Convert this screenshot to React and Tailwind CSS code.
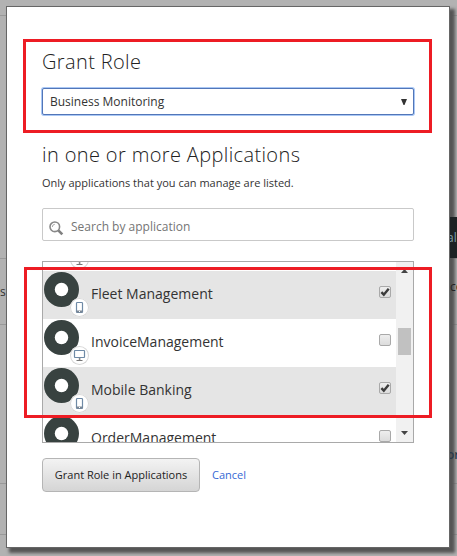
import React from 'react';

const apps = [
  { name: 'Expense Management', device: 'desktop', checked: false },
  { name: 'Fleet Management', device: 'phone', checked: true },
  { name: 'InvoiceManagement', device: 'desktop', checked: false },
  { name: 'Mobile Banking', device: 'phone', checked: true },
  { name: 'OrderManagement', device: 'desktop', checked: false },
];

function DeviceIcon({ device }) {
  if (device === 'phone') {
    return (
      <svg width="19" height="19" viewBox="0 0 19 19" fill="none">
        <rect x="6.5" y="4.5" width="6" height="10" rx="0.8" stroke="#6f8aa6" strokeWidth="1.2" />
        <path d="M6.5 12.5h6v2h-6z" fill="#7b8794" />
        <rect x="9" y="13" width="1" height="1" fill="#fff" />
      </svg>
    );
  }
  return (
    <svg width="19" height="19" viewBox="0 0 19 19" fill="none">
      <rect x="4.5" y="4.5" width="10" height="7" rx="0.5" stroke="#6f8aa6" strokeWidth="1.2" />
      <path d="M8.8 12h1.6v2H8.8z" fill="#888" />
      <path d="M6.5 14.5h6" stroke="#777" />
    </svg>
  );
}

function CheckBox({ checked }) {
  return (
    <span className="mr-[5px] mt-[15px] flex h-3 w-3 shrink-0 items-center justify-center rounded-[2px] border border-[#a9a9a9] bg-linear-to-b from-[#eeeeee] to-[#dcdcdc]">
      {checked && (
        <svg width="10" height="10" viewBox="0 0 10 10" className="shrink-0">
          <path d="M1.4 5.2l2.4 2.5L8.7 1.8" fill="none" stroke="#3c3c3c" strokeWidth="2.4" />
        </svg>
      )}
    </span>
  );
}

function AppRow({ app }) {
  return (
    <div className={`flex h-12 w-full shrink-0 pl-px ${app.checked ? 'bg-[#e5e5e5]' : 'bg-white'}`}>
      <div className="relative mt-px h-[35px] w-[35px] shrink-0">
        <svg width="35" height="35" viewBox="0 0 35 35">
          <circle cx="17.5" cy="17.5" r="17.5" fill="#384240" />
          <circle cx="17.5" cy="17.5" r="6.7" fill="#fff" />
        </svg>
        <span className="absolute left-[25.5px] top-[25.5px] h-[19px] w-[19px] rounded-full bg-white shadow-[inset_0_0_0_1px_#d8d8d8]">
          <DeviceIcon device={app.device} />
        </span>
      </div>
      <span className="ml-3 mt-[13px] grow text-[14px] leading-5 text-[#333]">{app.name}</span>
      <CheckBox checked={app.checked} />
    </div>
  );
}

function Backdrop() {
  return (
    <div className="absolute inset-0 overflow-hidden bg-[#b2b2b2] text-[12px] leading-4 text-[#333]">
      <div className="absolute left-0 top-[15px] h-px w-full bg-[#999]" />
      <div className="absolute left-0 top-[258px] h-px w-full bg-[#999]" />
      <div className="absolute left-0 top-[324px] h-px w-full bg-[#999]" />
      <div className="absolute left-0 top-[483px] h-px w-full bg-[#999]" />
      <div className="absolute left-0 top-[534px] h-px w-full bg-[#999]" />
      <span className="absolute left-0 top-[284px]">s</span>
    </div>
  );
}

export default function App() {
  return (
    <div className="relative h-[556px] w-[457px] overflow-hidden pl-[6px] pt-[6px] font-['Open_Sans','Noto_Sans',sans-serif]">
      <Backdrop />
      <main className="relative flex h-[542px] w-[444px] flex-col border border-[#666] bg-white pl-[35px] pr-[35px] text-[#333] shadow-[4px_4px_3px_1px_#555]">
        <h1 className="mt-[41px] text-[20px] font-light leading-7 tracking-[0.37px] text-[#222]">Grant Role</h1>
        <div className="mt-[12px] flex h-[27px] shrink-0 items-center justify-between rounded-[2px] border border-[#5276b8] bg-white pl-[7px] pr-[6px] text-[12px] shadow-[0_0_0_1px_#aac8f5]">
          <span>Business Monitoring</span>
          <svg width="6" height="6" viewBox="0 0 6 6">
            <path d="M0 0h6L3.5 6h-1z" fill="#333" />
          </svg>
        </div>
        <h2 className="mt-[26px] text-[20px] font-light leading-7 tracking-[0.37px] text-[#222]">in one or more Applications</h2>
        <p className="mt-[6px] text-[11px] leading-4">Only applications that you can manage are listed.</p>
        <div className="mt-[17px] flex h-[33px] shrink-0 items-center rounded-[2px] border border-[#c9c9c9] bg-white pl-[6px] text-[12px] text-[#757575]">
          <svg width="15" height="16" viewBox="0 0 15 16" fill="none" className="mr-[7px] mt-[9px]">
            <circle cx="5.8" cy="5.8" r="4.8" stroke="#888" strokeWidth="1.6" />
            <path d="M3.3 6a2.7 2.7 0 0 1 2.5-2.7" stroke="#aaa" />
            <path d="M9.3 9.3l4 4" stroke="#808080" strokeWidth="2.6" />
          </svg>
          <span className="mt-[4px]">Search by application</span>
        </div>
        <div className="mt-5 flex h-[182px] shrink-0 overflow-hidden border border-[#a9a9a9]">
          <div className="-mt-[39px] flex w-[353px] shrink-0 flex-col">
            {apps.map((app) => (
              <AppRow key={app.name} app={app} />
            ))}
          </div>
          <div className="flex w-[17px] shrink-0 flex-col items-center bg-[#f1f1f1] pt-[7px]">
            <svg width="7" height="4" viewBox="0 0 7 4" className="shrink-0">
              <path d="M3.5 0L7 4H0z" fill="#444" />
            </svg>
            <div className="mt-[55px] h-[27px] w-[13px] shrink-0 bg-[#c1c1c1]" />
            <svg width="7" height="4" viewBox="0 0 7 4" className="mt-[76px] shrink-0">
              <path d="M0 0h7L3.5 4z" fill="#444" />
            </svg>
          </div>
        </div>
        <div className="mt-[15px] flex items-center">
          <button className="h-[34px] w-[158px] rounded-[4px] border border-[#b5b5b5] bg-linear-to-b from-[#f3f3f3] to-[#d5d5d5] text-[11px] text-[#222]">
            Grant Role in Applications
          </button>
          <a className="ml-3 text-[11px] text-[#3568d4]">Cancel</a>
        </div>
      </main>
      <div className="absolute left-[450px] top-[217px] h-[41px] w-[7px] overflow-hidden bg-[#1c2224] text-[12px] leading-[41px] text-[#7f9fa9]">
        <span className="-ml-[3px]">ali</span>
      </div>
      <div className="absolute left-[450px] top-[279px] h-4 w-[7px] overflow-hidden text-[12px] leading-4 text-[#222]">co</div>
      <div className="absolute left-[450px] top-[447px] h-4 w-[7px] overflow-hidden text-[12px] font-semibold leading-4 text-[#2a3a48]">
        <span className="-ml-[3px]">or</span>
      </div>
      <div className="absolute left-[23px] top-[39px] h-[94px] w-[409px] border-3 border-[#ed1c24]" />
      <div className="absolute left-[24px] top-[267px] h-[151px] w-[408px] border-3 border-[#ed1c24]" />
    </div>
  );
}
